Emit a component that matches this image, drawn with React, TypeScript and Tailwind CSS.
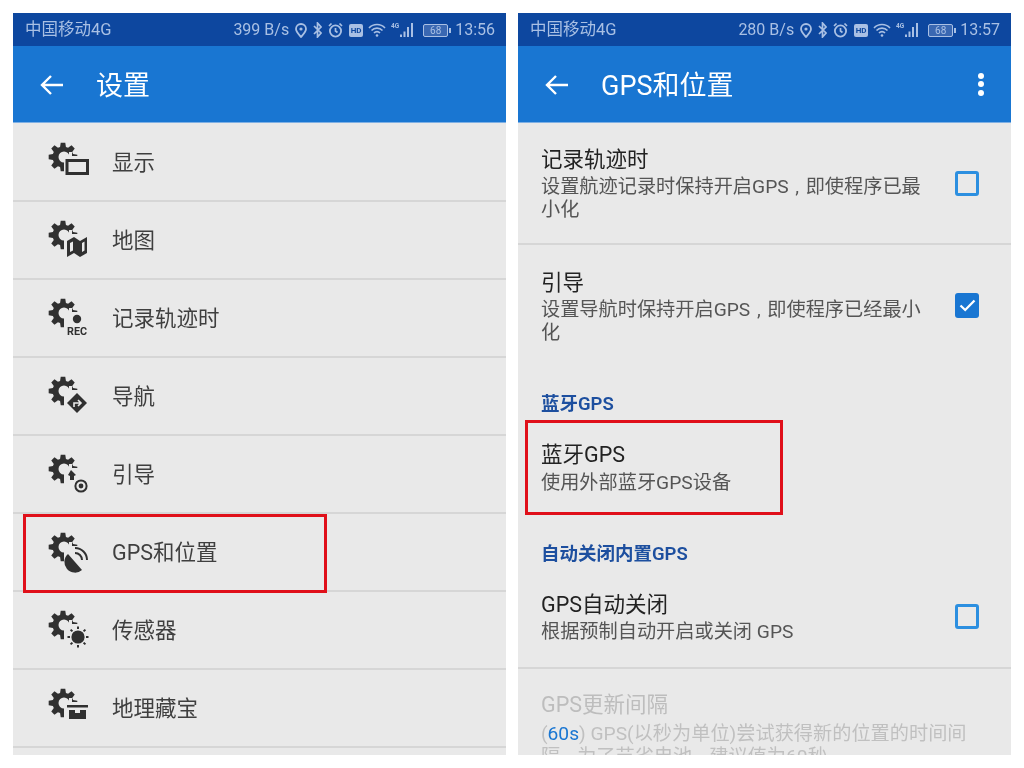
import React from "react";

const gearPath = (() => {
  const cx = 19, cy = 19, R = 14.5, r = 10.5, n = 8;
  const pts: string[] = [];
  for (let i = 0; i < n; i++) {
    const a = (i / n) * Math.PI * 2 - Math.PI / 2;
    const s = Math.PI * 2 / n;
    const add = (rad: number, ang: number) =>
      pts.push(`${(cx + rad * Math.cos(ang)).toFixed(2)} ${(cy + rad * Math.sin(ang)).toFixed(2)}`);
    add(r, a - s * 0.36);
    add(R, a - s * 0.2);
    add(R, a + s * 0.2);
    add(r, a + s * 0.36);
  }
  return "M" + pts.join("L") + "Z";
})();

const C = "#303030";

function Overlay({ kind }: { kind: string }) {
  switch (kind) {
    case "display":
      return <rect x="23" y="22.5" width="20.5" height="13" fill="none" stroke={C} strokeWidth="3" />;
    case "map":
      return <path d="M23 25 L30 21 L36 25 L43 21 V37 L36 41 L30 37 L23 41 Z M26 27 V36 L29 34.5 V25.5 Z M38 27 V36 L40.5 34.5 V25.5 Z" fill={C} fillRule="evenodd" />;
    case "rec":
      return (
        <>
          <circle cx="33" cy="25" r="4.2" fill={C} />
          <text x="33" y="41" textAnchor="middle" fontSize="11.5" fontWeight="700" fill={C} fontFamily="'Liberation Sans Narrow','Roboto',sans-serif" textLength="20" lengthAdjust="spacingAndGlyphs">REC</text>
        </>
      );
    case "nav":
      return (
        <>
          <path d="M33 21 L43 31 L33 41 L23 31 Z" fill={C} />
          <path d="M30 35 V31 H36 M34 28 L37 31 L34 34" fill="none" stroke="#e9e9e9" strokeWidth="1.6" />
        </>
      );
    case "guide":
      return (
        <>
          <path d="M27 20 L32 25 L30 26 V30 H26 V26 L24 25 Z" fill={C} />
          <circle cx="37" cy="36" r="5.6" fill="none" stroke={C} strokeWidth="2" />
          <circle cx="37" cy="36" r="2.4" fill={C} />
        </>
      );
    case "gps":
      return (
        <>
          <path d="M24 26 L38 42 A10.5 10.5 0 0 1 24 26 Z" fill={C} />
          <path d="M31 25 A7 7 0 0 1 38 32" fill="none" stroke={C} strokeWidth="2" />
          <path d="M31 20 A12 12 0 0 1 43 32" fill="none" stroke={C} strokeWidth="2" />
        </>
      );
    case "sun":
      return (
        <>
          <circle cx="34" cy="31" r="6.6" fill={C} />
          <path d="M34 20.5 V23 M34 39 V41.5 M23.5 31 H26 M42 31 H44.5 M26.6 23.6 L28.4 25.4 M39.6 36.6 L41.4 38.4 M26.6 38.4 L28.4 36.6 M39.6 25.4 L41.4 23.6" stroke={C} strokeWidth="2" />
        </>
      );
    case "chest":
      return (
        <>
          <path d="M23 21 H44 V23.5 H23 Z" fill={C} />
          <path d="M25 26 H31 V29 H36 V26 H42 V35 H25 Z" fill={C} />
        </>
      );
    default:
      return null;
  }
}

function SettingIcon({ kind }: { kind: string }) {
  const id = `m-${kind}`;
  return (
    <svg width="50" height="40" viewBox="0 0 50 40" className="shrink-0 overflow-visible -mt-[10px]">
      <mask id={id} maskUnits="userSpaceOnUse" x="0" y="0" width="50" height="50">
        <rect x="0" y="0" width="50" height="50" fill="white" />
        <circle cx="20" cy="19" r="5.5" fill="black" />
        <rect x="20" y="18" width="30" height="30" fill="black" />
        <rect x="25" y="14" width="3" height="6" fill="black" />
      </mask>
      <path d={gearPath} fill={C} mask={`url(#${id})`} />
      <Overlay kind={kind} />
    </svg>
  );
}

function StatusBar({ speed, time }: { speed: string; time: string }) {
  const s = "#a9c0e4";
  return (
    <div className="h-[33px] bg-[#0d479f] flex items-center pl-[12px] pr-[11px] pt-[1px] text-[#a9c0e4] text-[16px] shrink-0">
      <span className="text-[16.5px]">中国移动4G</span>
      <div className="ml-auto flex items-center">
        <span className="mr-[6px]">{speed}</span>
        <svg width="12" height="15" viewBox="0 0 12 15" className="mr-[6px]">
          <path d="M6 14 C3 10.5 1 8.5 1 6 A5 5 0 0 1 11 6 C11 8.5 9 10.5 6 14 Z" fill="none" stroke={s} strokeWidth="1.8" />
          <circle cx="6" cy="6" r="1.6" fill={s} />
        </svg>
        <svg width="9" height="16" viewBox="0 0 9 16" className="mr-[6px]">
          <path d="M1 4 L8 11 L4.5 15 V1 L8 5 L1 12" fill="none" stroke={s} strokeWidth="1.7" />
        </svg>
        <svg width="15" height="16" viewBox="0 0 15 16" className="mr-[6px]">
          <circle cx="7.5" cy="9" r="5.6" fill="none" stroke={s} strokeWidth="1.8" />
          <path d="M7.5 6 V9 L9.5 10.5 M1 4 L3.5 1.5 M14 4 L11.5 1.5" fill="none" stroke={s} strokeWidth="1.7" />
        </svg>
        <span className="w-[14px] h-[13px] rounded-[2px] bg-[#a9c0e4] text-[#0d479f] text-[8px] font-bold leading-[13px] text-center mr-[5px]">HD</span>
        <svg width="18" height="14" viewBox="0 0 18 14" className="mr-[5px]">
          <path d="M1 5 A11 11 0 0 1 17 5 M3.5 7.5 A7.5 7.5 0 0 1 14.5 7.5 M6 10 A4 4 0 0 1 12 10" fill="none" stroke={s} strokeWidth="1.6" />
          <circle cx="9" cy="12.5" r="1.3" fill={s} />
        </svg>
        <svg width="23" height="16" viewBox="0 0 23 16" className="mr-[9px]">
          <text x="0" y="6" fontSize="6.5" fontWeight="700" fill={s} fontFamily="Roboto,sans-serif">4G</text>
          <path d="M9 12.5 h2 v2.5 h-2 Z M12.5 9.5 h2 v5.5 h-2 Z M16 5 h2 v10 h-2 Z M20 1 h2 v14 h-2 Z" fill={s} />
        </svg>
        <span className="w-[25px] h-[13px] rounded-[2px] border border-[#a9c0e4] bg-[#3a68b2] text-[#a9c0e4] text-[10px] leading-[11px] text-center">68</span>
        <span className="w-[2px] h-[5px] bg-[#a9c0e4] ml-[1px] mr-[4px]" />
        <span>{time}</span>
      </div>
    </div>
  );
}

function AppBar({ title, menu }: { title: string; menu?: boolean }) {
  return (
    <div className="h-[77px] bg-[#1976d2] border-b border-[#7fb0e4] flex items-center pl-[27px] pr-[27px] shrink-0">
      <svg width="24" height="22" viewBox="0 0 24 22" className="mt-[2px] shrink-0">
        <path d="M23 11 H2 M11 2 L2 11 L11 20" fill="none" stroke="white" strokeWidth="2.4" />
      </svg>
      <span className="ml-[32px] text-white text-[27px] leading-[30px] mt-[4px]">{title}</span>
      {menu && (
        <div className="ml-auto flex flex-col gap-[2.5px]">
          <span className="w-[6px] h-[6px] rounded-full bg-white" />
          <span className="w-[6px] h-[6px] rounded-full bg-white" />
          <span className="w-[6px] h-[6px] rounded-full bg-white" />
        </div>
      )}
    </div>
  );
}

function Check({ on }: { on?: boolean }) {
  return on ? (
    <div className="w-[24px] h-[25px] rounded-[3px] bg-[#1976d2] flex items-center justify-center shrink-0 -mt-[2px]">
      <svg width="17" height="13" viewBox="0 0 17 13">
        <path d="M1.5 6.5 L6.2 11 L15.5 1.5" fill="none" stroke="white" strokeWidth="2.3" />
      </svg>
    </div>
  ) : (
    <div className="w-[24px] h-[25px] rounded-[3px] border-[3px] border-[#2c8fe0] shrink-0" />
  );
}

const leftRows = [
  ["display", "显示"],
  ["map", "地图"],
  ["rec", "记录轨迹时"],
  ["nav", "导航"],
  ["guide", "引导"],
  ["gps", "GPS和位置"],
  ["sun", "传感器"],
  ["chest", "地理藏宝"],
];

function Comma() {
  return <span className="inline-block w-[17px] text-center">,</span>;
}

function CheckRow({ title, lines, on, border }: { title: string; lines: React.ReactNode[]; on?: boolean; border?: boolean }) {
  return (
    <div className={`h-[122px] flex items-center pl-[23px] pr-[32px] justify-between ${border ? "border-b-2 border-[#d6d6d6]" : ""}`}>
      <div className="mt-[2px]">
        <div className="text-[21.5px] leading-[26px] text-[#222222]">{title}</div>
        <div className="mt-[2px] text-[19.2px] leading-[23px] text-[#555555] whitespace-nowrap">
          {lines.map((l, i) => (
            <div key={i}>{l}</div>
          ))}
        </div>
      </div>
      <Check on={on} />
    </div>
  );
}

export default function App() {
  return (
    <div className="w-[1024px] h-[768px] bg-white flex gap-[12px] pt-[13px] pl-[13px] overflow-hidden font-['Roboto','Noto_Sans_CJK_SC',sans-serif] blur-[0.4px]">
      <div className="relative w-[493px] h-[742px] overflow-hidden bg-[#e9e9e9] flex flex-col">
        <StatusBar speed="399 B/s" time="13:56" />
        <AppBar title="设置" />
        <div className="h-[1px] shrink-0" />
        {leftRows.map(([k, t]) => (
          <div key={k} className="h-[78px] shrink-0 border-b-2 border-[#d6d6d6] flex items-center pl-[31px] pt-[2px]">
            <SettingIcon kind={k} />
            <span className="ml-[18px] text-[21.5px] text-[#3f3f3f]">{t}</span>
          </div>
        ))}
        <div className="absolute left-[10px] top-[501px] w-[304px] h-[79px] border-[3px] border-[#e0101a]" />
      </div>

      <div className="relative w-[493px] h-[742px] overflow-hidden bg-[#e9e9e9] flex flex-col">
        <StatusBar speed="280 B/s" time="13:57" />
        <AppBar title="GPS和位置" menu />
        <div className="shrink-0">
          <CheckRow
            title="记录轨迹时"
            lines={[
              <>设置航迹记录时保持开启GPS<Comma />即使程序已最</>,
              "小化",
            ]}
            border
          />
          <CheckRow
            title="引导"
            lines={[
              <>设置导航时保持开启GPS<Comma />即使程序已经最小</>,
              "化",
            ]}
            on
          />
        </div>
        <div className="h-[55px] pt-[25px] pl-[23px] text-[18.5px] leading-[24px] font-semibold text-[#1d4f9f] shrink-0">蓝牙GPS</div>
        <div className="h-[90px] pt-[20px] pl-[23px] shrink-0">
          <div className="text-[21.5px] leading-[26px] text-[#222222]">蓝牙GPS</div>
          <div className="mt-[3px] text-[19.2px] leading-[24px] text-[#555555]">使用外部蓝牙GPS设备</div>
        </div>
        <div className="h-[53px] pt-[30px] pl-[23px] text-[18.5px] leading-[24px] font-semibold text-[#1d4f9f] shrink-0">自动关闭内置GPS</div>
        <div className="h-[104px] flex items-center justify-between pl-[23px] pr-[32px] border-b-2 border-[#d6d6d6] shrink-0">
          <div className="mt-[4px]">
            <div className="text-[21.5px] leading-[26px] text-[#222222]">GPS自动关闭</div>
            <div className="mt-[2px] text-[19.2px] leading-[24px] text-[#555555]">根据预制自动开启或关闭 GPS</div>
          </div>
          <Check />
        </div>
        <div className="pt-[23px] pl-[23px] shrink-0">
          <div className="text-[21.5px] leading-[26px] text-[#bdbdbd]">GPS更新间隔</div>
          <div className="mt-[4px] text-[19.2px] leading-[23px] text-[#c0c0c0] whitespace-nowrap">
            <div>
              (<span className="text-[#1976d2]">60s</span>) GPS(以秒为单位)尝试获得新的位置的时间间
            </div>
            <div>隔<Comma />为了节省电池<Comma />建议值为60秒</div>
          </div>
        </div>
        <div className="absolute left-[7px] top-[407px] w-[258px] h-[95px] border-[3px] border-[#e0101a]" />
      </div>
    </div>
  );
}
